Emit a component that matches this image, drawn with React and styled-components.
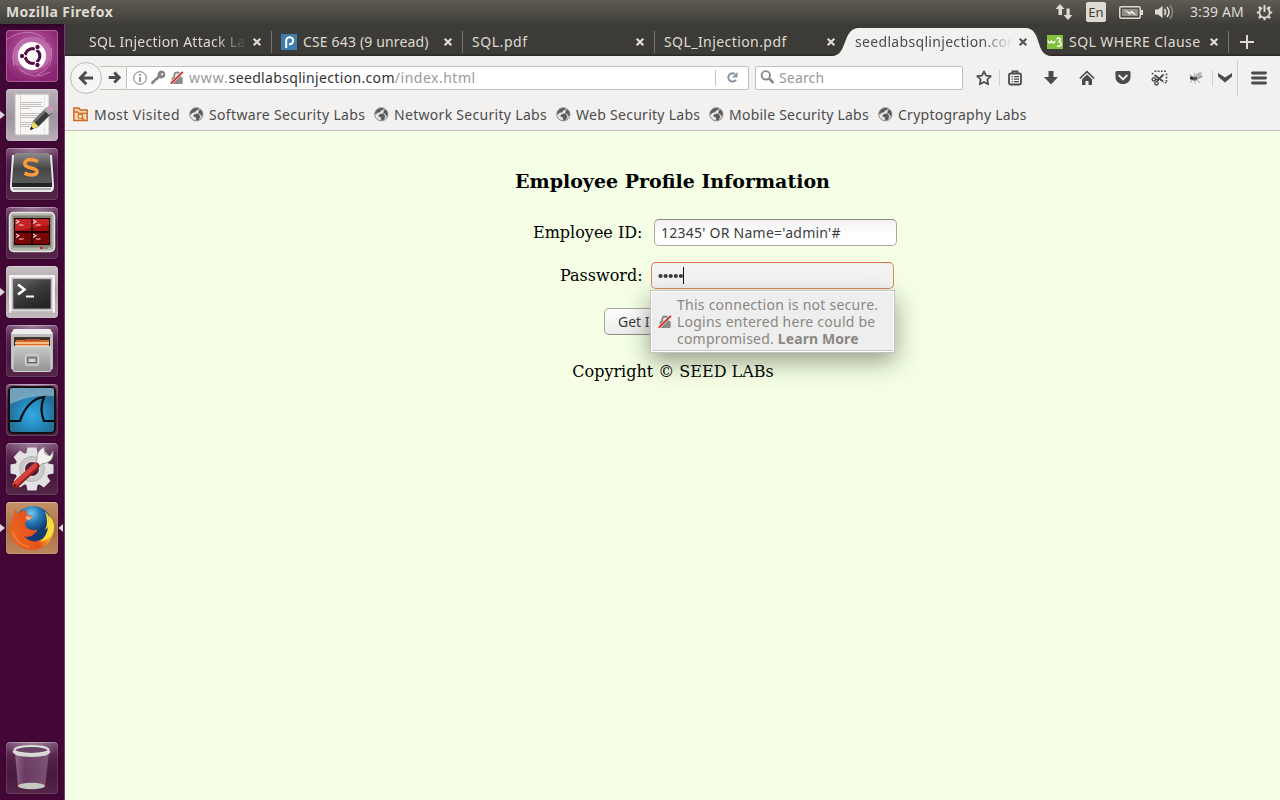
import React from 'react';
import styled, { createGlobalStyle } from 'styled-components';

const Global = createGlobalStyle`
  * { box-sizing: border-box; }
  html, body { margin: 0; padding: 0; overflow: hidden; }
  body { font-family: "Noto Sans", "Open Sans", sans-serif; font-size: 14px; color: #4c4c4c; }
  svg { display: block; flex: none; }
`;

const Desktop = styled.div`
  width: 1280px; height: 800px; display: flex; flex-direction: column; overflow: hidden;
`;
const Label = styled.span`
  white-space: pre; letter-spacing: ${p => p.$ls || 0}px; line-height: 20px;
  font-weight: ${p => (p.$bold ? 700 : 400)};
`;

/* top panel */
const Panel = styled.header`
  height: 24px; flex: none; display: flex; align-items: center; color: #dfdbd2;
  padding: 0 7px 0 6px; background: linear-gradient(#5f5d50 0, #5b5850 2px, #3f3e39 24px);
`;
const Indicators = styled.div`
  margin-left: auto; display: flex; align-items: center;
`;
const Lang = styled.span`
  width: 20px; height: 20px; margin: 0 13px 0 13px; border-radius: 2px; background: #dfdbd2;
  color: #3c3b37; display: flex; align-items: center; justify-content: center; font-size: 13px;
`;
const VolumeIcon = styled.svg`margin-left: 11px;`;
const Clock = styled(Label)`margin: 0 12px 0 15px; width: 54px;`;

const Body = styled.div`display: flex; flex: 1; min-height: 0;`;

/* launcher */
const Launcher = styled.nav`
  width: 65px; flex: none; padding: 6px 0 6px; display: flex; flex-direction: column; gap: 7px;
  background: linear-gradient(#2f0427 0, #410735 5px, #430736 100%); border-right: 1px solid #7b3b76;
`;
const Slot = styled.div`
  height: 52px; display: flex; align-items: center;
  margin-top: ${p => (p.$last ? 'auto' : 0)};
`;
const Gutter = styled.span`width: 6px; flex: none;`;
const Tile = styled.div`
  width: 52px; height: 52px; border-radius: 4px; overflow: hidden;
  background: ${p => p.$bg};
  box-shadow: inset 0 0 0 1px rgba(255,255,255,.12), inset 0 1px 0 rgba(255,255,255,.25), 0 0 2px rgba(0,0,0,.4);
`;

/* browser */
const Browser = styled.main`flex: 1; min-width: 0; display: flex; flex-direction: column;`;
const TabStrip = styled.div`
  height: 32px; flex: none; display: flex; padding-left: 15px; color: #dfdbd2;
  background: linear-gradient(#3c3b37 0 30px, #2b2a27 31px);
`;
const Tab = styled.div`
  position: relative; width: ${p => p.$w}px; height: 32px; display: flex; align-items: center;
  padding: 4px 9px 0 9px; color: ${p => (p.$active ? '#4c4c4c' : '#dfdbd2')};
  &::before {
    content: ''; position: absolute; left: 0; top: 7px; width: 1px; height: 22px;
    background: ${p => (p.$rule ? '#75746e' : 'transparent')};
  }
`;
const TabShape = styled.svg`position: absolute; left: -13px; top: 4px;`;
const Favicon = styled.svg`margin-left: 1px;`;
const TabText = styled(Label)`
  position: relative; flex: 1; min-width: 0; overflow: hidden; margin-left: ${p => p.$gap || 0}px;
  ${p => p.$fade && 'mask-image: linear-gradient(90deg, #000 calc(100% - 32px), transparent 100%);'}
`;
const TabClose = styled.svg`position: relative; margin-left: 5px;`;
const NewTab = styled.div`
  width: 52px; padding: 4px 0 0 11px; display: flex; align-items: center; position: relative;
  &::before { content: ''; position: absolute; left: 0; top: 7px; width: 1px; height: 22px; background: #75746e; }
`;

const NavBar = styled.div`
  height: 43px; flex: none; background: #f2f1f0; display: flex; align-items: center; padding-left: 5px;
`;
const Back = styled.div`
  width: 32px; height: 32px; border-radius: 50%; border: 1px solid #bdbbb8; background: #f6f5f4;
  display: flex; align-items: center; justify-content: center; flex: none; z-index: 1;
`;
const Forward = styled.div`
  width: 26px; height: 24px; margin-left: -2px; background: #f6f5f4; border: solid #c2c0bd; border-width: 1px 0;
  display: flex; align-items: center; justify-content: center; padding-left: 2px;
`;
const UrlField = styled.div`
  width: 623px; height: 24px; border: 1px solid #c2c0bd; border-radius: 0 2px 2px 0; background: #fff;
  display: flex; align-items: center; padding-left: 6px; gap: 4px;
`;
const Address = styled.div`display: flex; flex: 1; margin-left: 1px; color: #999a9b;`;
const Host = styled(Label)`color: #333;`;
const Reload = styled.div`
  width: 33px; height: 16px; border-left: 1px solid #c8c6c4; display: flex; align-items: center; justify-content: center;
`;
const SearchField = styled.div`
  width: 208px; height: 24px; margin-left: 6px; border: 1px solid #c2c0bd; border-radius: 2px; background: #fff;
  display: flex; align-items: center; padding-left: 4px; gap: 4px; color: #96989a;
`;
const Tools = styled.div`flex: 1; display: flex; align-items: center;`;
const Tool = styled.div`
  width: ${p => p.$w}px; padding-left: ${p => p.$pad || 0}px; display: flex; justify-content: center; flex: none;
`;
const Rule = styled.span`width: 1px; height: ${p => p.$h}px; background: #d3d1cf; flex: none;`;

const Bookmarks = styled.div`
  height: 32px; flex: none; background: #f2f1f0; border-bottom: 1px solid #c5c2bd; display: flex;
  align-items: center; padding-left: 8px;
`;
const Bookmark = styled.div`
  display: flex; align-items: center; gap: ${p => p.$gap || 5}px; width: ${p => p.$w}px; flex: none;
`;

/* page */
const Page = styled.section`
  flex: 1; background: #f4ffe5; color: #000; font: 16px/19px "DejaVu Serif", serif;
  display: flex; flex-direction: column; align-items: flex-start; padding-top: 39px;
`;
const Title = styled.h3`margin: 0; width: 1215px; text-align: center; font-size: 19px; line-height: 23px; font-weight: 700;`;
const FieldRow = styled.div`
  display: flex; align-items: center; height: 27px; gap: ${p => p.$gap}px;
  margin: ${p => p.$top}px 0 0 ${p => p.$left}px;
`;
const Caption = styled.label`width: ${p => p.$w}px; white-space: nowrap;`;
const Field = styled.div`
  position: relative; width: 243px; height: 27px; border-radius: 5px; padding-left: 6px;
  border: 1px solid ${p => (p.$focus ? '#e0876a' : '#aaa9a5')}; border-top-color: ${p => (p.$focus ? '#dd7350' : '#8b8a86')};
  background: ${p => (p.$focus ? 'linear-gradient(#f1f1f0,#f7f7f7)' : 'linear-gradient(#f2f2f2,#fff 60%)')};
  color: #3c3c3c; display: flex; align-items: center; font-family: "Noto Sans", sans-serif; font-size: 14px;
`;
const Dots = styled.svg`margin-left: -1px;`;
const Caret = styled.span`width: 1px; height: 17px; background: #111;`;
const Submit = styled.div`
  width: 76px; height: 27px; margin: 19px 0 0 539px; border: 1px solid #a9a8a4; border-bottom-color: #8f8e8a;
  border-radius: 5px; background: linear-gradient(#fff,#ececeb); color: #3c3c3c; padding-left: 13px;
  display: flex; align-items: center; font-family: "Noto Sans", sans-serif; font-size: 14px;
`;
const Copyright = styled.p`margin: 27px 0 0; width: 1216px; text-align: center;`;
const Warning = styled.div`
  position: absolute; left: -2px; top: 27px; z-index: 2; width: 245px; height: 63px; background: #eee;
  border: 1px solid #c3c3c1; box-shadow: inset 0 0 0 1px #fff, inset 0 -2px 0 #c9c9c7, 0 8px 24px rgba(50,60,40,.5);
  display: flex; align-items: center; padding-left: 7px; gap: 5px; color: #8b8782;
`;
const WarningText = styled.div`
  display: flex; flex-direction: column; font-size: 14px;
  ${Label} { line-height: 17px; }
`;

const Cross = ({ c }) => (
  <TabClose width="10" height="10" viewBox="0 0 10 10">
    <path d="M1.7 1.7L8.3 8.3M8.3 1.7L1.7 8.3" stroke={c} strokeWidth="2.2" />
  </TabClose>
);
const Lock = () => (
  <svg width="14" height="14" viewBox="0 0 14 14">
    <path d="M4.300 7V4.300a2.800 2.800 0 0 1 5.600 0V7" fill="none" stroke="#8b8b89" strokeWidth="2" />
    <rect x="1.700" y="6" width="11" height="7" rx="1" fill="#8b8b89" />
    <path d="M1 12.500L12.700 1" stroke="#f5eeee" strokeWidth="2.800" />
    <path d="M.8 12.700L12.900 .9" stroke="#d92d21" strokeWidth="1.800" />
  </svg>
);
const Globe = () => (
  <svg width="15" height="15" viewBox="0 0 15 15">
    <defs><linearGradient id="gl" x2="1" y2="1"><stop stopColor="#fdfdfd" /><stop offset="1" stopColor="#c9c9c9" /></linearGradient></defs>
    <circle cx="7.300" cy="7.300" r="6.600" fill="url(#gl)" stroke="#8a8a8a" />
    <path d="M3.800 2Q7 .3 10 1.400L9 3.200 7 3.500 6.200 5.300 3.600 5.800 1.800 7.800 1 6.500Q1.400 3.600 3.800 2zM10 2.800l2 .3Q14.200 5.500 13.700 8.200L12.200 9 11.200 7l-2-.8zM5.800 7l3.500-.4 2 2.900-1.600 3.500-2.200.6-.8-3.300L4 9.300z" fill="#5c5c5c" />
  </svg>
);
const Arrow = ({ flip, size }) => (
  <svg width={size} height={size} viewBox="0 0 16 16">
    <g transform={flip ? 'translate(16 0) scale(-1 1)' : undefined} fill="none" stroke="#4b4b4a" strokeWidth={flip ? 3.6 : 2.9}>
      <path d="M15 8H3M8.3 1.8L2.3 8l6 6.200" />
    </g>
  </svg>
);

const UbuntuLogo = () => (
  <svg width="52" height="52" viewBox="0 0 52 52">
    <defs><radialGradient id="ub" cx=".5" cy=".42" r=".6"><stop offset="0" stopColor="#c87ab5" /><stop offset=".65" stopColor="#a03c88" /><stop offset="1" stopColor="#8a2371" /></radialGradient></defs>
    <rect width="52" height="52" rx="4" fill="url(#ub)" />
    <path d="M8 35C2 18 16 2 35 8 48 14 48 31 37 38" fill="#d99aca" opacity=".3" />
    <path d="M44 13C52 30 34 50 16 42 4 34 8 16 18 12" fill="#d99aca" opacity=".2" />
    <path d="M0 10Q22-5 39 9M8 36Q3 16 20 8M45 18Q49 38 31 45M14 40Q28 51 44 42" fill="none" stroke="#e4b5d9" opacity=".5" />
    <rect x=".5" y=".5" width="51" height="51" rx="3.500" fill="none" stroke="#c67db4" opacity=".6" />
    <circle cx="26" cy="26" r="14" fill="#fff" />
    <circle cx="26.500" cy="26" r="7.300" fill="none" stroke="#570c43" strokeWidth="3.200" />
    <path d="M26.500 26L15 26M26.500 26L31 35.500M26.500 26L31 16.500" stroke="#fff" strokeWidth="1.500" />
    {[[16, 26], [31.5, 17], [31.5, 35]].map(([x, y]) => <circle key={y} cx={x} cy={y} r="2.700" fill="#570c43" stroke="#fff" strokeWidth="1" />)}
    <circle cx="26.500" cy="26" r="5.600" fill="#fff" />
  </svg>
);
const Editor = () => (
  <svg width="52" height="52" viewBox="0 0 52 52">
    <path d="M9 5h34v41H9z" fill="#f7f7f5" stroke="#bcb9b9" />
    <path d="M14.500 5v41" stroke="#f1c5cc" />
    <path d="M38.500 5v41" stroke="#dfe4ee" />
    <path d="M15 13.500h21M15 15.500h20M15 17.500h22M15 19.500h9M15 24.500h20M15 26.500h21M15 28.500h15M15 33.500h13M15 35.500h12M15 37.500h9" stroke="#b4b4b4" strokeWidth=".8" />
    <path d="M24 41l3-9 13-13 6 5-14 14z" fill="#393a3a" />
    <path d="M28 33L41 20" stroke="#777" strokeWidth="2" />
    <path d="M24 41l3-9 5.500 5.500z" fill="#eedb67" /><path d="M24 41l1.200-3.500 2.300 2.300z" fill="#111" />
    <path d="M38 21l3-3 5.500 5-3.500 3z" fill="#a9a9a9" /><path d="M41 18q2.500-2.500 5 0 2.500 3 .5 5z" fill="#df91c7" />
  </svg>
);
const Sublime = () => (
  <svg width="52" height="52" viewBox="0 0 52 52">
    <defs><linearGradient id="sb" x2="0" y2="1"><stop stopColor="#8c8c8c" /><stop offset=".45" stopColor="#505050" /><stop offset=".5" stopColor="#454545" /><stop offset="1" stopColor="#5a5a5a" /></linearGradient></defs>
    <path d="M6 7l-2 31q0 6 4 6h36q4 0 4-6L46 7z" fill="#e9e9e9" />
    <path d="M7 41h38" stroke="#999" strokeWidth="1.500" />
    <path d="M6 34h40v5H6z" fill="#222" />
    <path d="M11 5h30q3 0 3 3l2 25q0 2-2 2H8q-2 0-2-2L8 8q0-3 3-3z" fill="url(#sb)" />
    <path d="M32 13.500Q26 10.500 21.500 12 17.500 14 19.500 17.500c2 3 10.500 2 11.500 5.500 .5 4.500-6.500 5-12.500 2.200" fill="none" stroke="#f79b3c" strokeWidth="3.600" />
  </svg>
);
const Terminator = () => (
  <svg width="52" height="52" viewBox="0 0 52 52">
    <rect x="3.500" y="5.500" width="45" height="39" rx="4" fill="#b3b6ad" stroke="#e6e6e0" strokeWidth="1.500" />
    <rect x="6.500" y="8.500" width="39" height="32" fill="#80837a" /><rect x="8" y="11" width="36" height="27" fill="#200" />
    <path d="M9 12h16v12H9zM27 12h16v12H27z" fill="#a80d0d" /><path d="M9 26h16v11H9zM27 26h16v11H27z" fill="#7a0505" />
    <path d="M9 12h34v6L9 24z" fill="#f55" opacity=".3" />
    {[[10, 13], [27, 13], [10, 27], [27, 27]].map(([x, y]) => <path key={x + '-' + y} d={`M${x} ${y}l3 1.500-3 2M${x + 3} ${y + 5}h4.500`} stroke="#ffd6d6" strokeWidth="1.100" fill="none" />)}
    <path d="M34 41h3" stroke="#e11" strokeWidth="2" /><path d="M38 41h4" stroke="#858880" strokeWidth="2" />
  </svg>
);
const Terminal = () => (
  <svg width="52" height="52" viewBox="0 0 52 52">
    <defs><linearGradient id="tm" x2=".6" y2="1"><stop stopColor="#666" /><stop offset=".5" stopColor="#3c3c3c" /><stop offset="1" stopColor="#252525" /></linearGradient></defs>
    <rect x="4" y="10" width="44" height="36" fill="#deddda" stroke="#fff" strokeWidth="1.500" />
    <path d="M5 46h42" stroke="#888" /><rect x="7" y="13" width="38" height="30" fill="#292929" stroke="#999" />
    <rect x="8" y="14" width="36" height="28" fill="url(#tm)" />
    <path d="M12 18.500l6.500 5-6.500 5" fill="none" stroke="#fff" strokeWidth="2.600" /><path d="M20 30.500h8" stroke="#fff" strokeWidth="2.200" />
  </svg>
);
const Files = () => (
  <svg width="52" height="52" viewBox="0 0 52 52">
    <defs><linearGradient id="fl" x2="0" y2="1"><stop stopColor="#c8c8c8" /><stop offset="1" stopColor="#939393" /></linearGradient></defs>
    <path d="M8 4h36l3 5v35H5V9z" fill="#bdbdbd" /><path d="M8 4h36l3 5H5z" fill="#ededed" />
    <path d="M8 12h36v11H8z" fill="#3d3430" /><path d="M10 15h33v7H9z" fill="#d9672d" /><path d="M9 17h34v2H9zM9 20h34v2H9z" fill="#f5bf82" />
    <path d="M20 14h13l2 2H18z" fill="#b3502a" /><rect x="7" y="21.500" width="38" height="25" rx="1.500" fill="url(#fl)" stroke="#d4d4d4" />
    <rect x="19.500" y="30" width="13" height="10" rx="2" fill="#a3a3a3" stroke="#e4e4e4" /><rect x="22" y="33" width="8" height="4.500" fill="#d5d5d5" stroke="#5d5d5d" />
  </svg>
);
const Shark = () => (
  <svg width="52" height="52" viewBox="0 0 52 52">
    <defs><radialGradient id="sh" cy=".6"><stop stopColor="#35aae6" /><stop offset=".65" stopColor="#2387b8" /><stop offset="1" stopColor="#276f99" /></radialGradient></defs>
    <rect x="3" y="3" width="46" height="46" rx="4" fill="url(#sh)" stroke="#111" strokeWidth="2" />
    <path d="M4 4h44v8Q25 10 4 20z" fill="#fff" opacity=".35" />
    <path d="M4 37h10C18 24 27 14 38 13q-5 12 0 24h10" fill="none" stroke="#080b0d" strokeWidth="2.200" />
  </svg>
);
const Settings = () => (
  <svg width="52" height="52" viewBox="0 0 52 52">
    <g transform="translate(26 26)" fill="#e2e2e2">
      {[0, 45, 90, 135, 180, 225, 270, 315].map(a => <path key={a} transform={`rotate(${a})`} d="M-6-14l1.500-7.500h9L6-14z" />)}
      <path fillRule="evenodd" d="M-17 0a17 17 0 1 0 34 0a17 17 0 1 0-34 0M-7 0a7 7 0 1 1 14 0a7 7 0 1 1-14 0" />
      <circle r="10" fill="none" stroke="#c9c9c9" strokeWidth="4" /><circle r="12.500" fill="none" stroke="#b1b1b1" />
    </g>
    <path d="M31 17Q30 8 38 4l1 7 5 2 3-5q1 10-7 12-5 0-6 3l-5-3z" fill="#f1f1ee" stroke="#8d8d8d" strokeWidth=".8" />
    <path d="M30 23L9.500 42" stroke="#98211d" strokeWidth="7" strokeLinecap="round" /><path d="M29 22.500L9 41" stroke="#d4433c" strokeWidth="4.500" strokeLinecap="round" />
    <circle cx="9" cy="42.500" r="1.500" fill="#5f1410" />
  </svg>
);
const Firefox = () => (
  <svg width="52" height="52" viewBox="0 0 52 52">
    <defs><radialGradient id="fb" cx=".45" cy=".2"><stop stopColor="#74c8ee" /><stop offset=".5" stopColor="#2476b5" /><stop offset="1" stopColor="#103a70" /></radialGradient>
      <linearGradient id="fo" x1="0" x2="1" y1=".7" y2=".4"><stop stopColor="#ed641d" /><stop offset=".55" stopColor="#e5521e" /><stop offset=".8" stopColor="#f3a12b" /><stop offset="1" stopColor="#f9e03c" /></linearGradient></defs>
    <circle cx="27" cy="23" r="19" fill="url(#fb)" />
    <path d="M8 8q3 1 4 4 4-4 8-4 0 4 2 5l4 1q0 3-4 4l-3 3 1 4q4 4 9 3 4-1 1 2-6 7-12 4 8 9 18 3C45 32 45 20 40 11q8 7 8 15C47 40 38 48 26 48 13 48 4 39 4 27 4 19 9 15 8 8z" fill="url(#fo)" />
    <path d="M39 9q4 12 0 19l3-3q-1 9-8 15Q48 37 48 23q-1-5-4-8 0 4-1 5 0-6-4-11z" fill="#f8de3d" />
    <path d="M20 14q-1 4 3 4l3-3z" fill="#f3b680" />
    <path d="M7 30q4 13 17 15" fill="none" stroke="#f79548" strokeWidth="1.500" opacity=".6" />
  </svg>
);
const Trash = () => (
  <svg width="52" height="52" viewBox="0 0 52 52">
    <defs><linearGradient id="tr"><stop stopColor="#a98aa6" stopOpacity=".7" /><stop offset=".3" stopColor="#8a5c85" stopOpacity=".5" /><stop offset="1" stopColor="#9a7896" stopOpacity=".6" /></linearGradient></defs>
    <path d="M9 10h34l-4 35H12z" fill="url(#tr)" />
    <ellipse cx="25.500" cy="44" rx="13.500" ry="3.300" fill="#c7c9c0" />
    <ellipse cx="25.500" cy="8" rx="17" ry="4" fill="#6b4367" stroke="#dcddd6" strokeWidth="2.200" />
    <path d="M8 9q0 4.500 17.500 4.500T43 9" fill="none" stroke="#d7d9d0" strokeWidth="2.800" />
  </svg>
);

const dim = 'radial-gradient(ellipse 60% 30% at 50% 0, #a07f9b, transparent), linear-gradient(#70406a 0,#54234c 30%,#49173f 60%,#552549 100%)';
const apps = [
  { Icon: UbuntuLogo, bg: '#93317d' },
  { Icon: Editor, bg: 'linear-gradient(#bdb5bb,#9e949c 55%,#bab2b8)', run: true },
  { Icon: Sublime, bg: dim }, { Icon: Terminator, bg: dim },
  { Icon: Terminal, bg: 'linear-gradient(#c7c1c5,#a9a1a7 45%,#bfb8bd)', run: true },
  { Icon: Files, bg: dim }, { Icon: Shark, bg: dim }, { Icon: Settings, bg: dim },
  { Icon: Firefox, bg: 'linear-gradient(#c49369,#a96e43 55%,#bd895e)', run: true, focus: true },
];

const Pip = ({ left }) => (
  <svg width="5" height="8" viewBox="0 0 5 8"><path d={left ? 'M5 0v8L.5 4z' : 'M0 0v8l5-4z'} fill="#dcd5da" /></svg>
);

export default function App() {
  return (
    <Desktop>
      <Global />
      <Panel>
        <Label $bold $ls={0.38}>Mozilla Firefox</Label>
        <Indicators>
          <svg width="18" height="18" viewBox="0 0 18 18" fill="#dfdbd2">
            <path d="M5 1l4.500 5H7v6H3.500V6H.5zM13 17l4.500-5H14.700V5.500h-3.200V12H8.500z" />
          </svg>
          <Lang><Label>En</Label></Lang>
          <svg width="24" height="13" viewBox="0 0 24 13">
            <rect x=".75" y=".75" width="20.500" height="11.500" rx="1.500" fill="none" stroke="#dfdbd2" strokeWidth="1.500" />
            <path d="M22 4h2v5h-2z" fill="#dfdbd2" /><path d="M3 3h16v7H3z" fill="#908d85" />
            <path d="M5 3.500l6.500 3 .5-2.500 6 5.500-6.500-2.500-.5 2z" fill="#f3efe6" />
          </svg>
          <VolumeIcon width="21" height="16" viewBox="0 0 21 16">
            <path d="M1 5.500h3L8.500 2v12L4 10.500H1z" fill="#dfdbd2" />
            <g fill="none" strokeWidth="1.600"><path d="M10.500 5q2.200 3 0 6M13 3q4 5 0 10" stroke="#dfdbd2" /><path d="M15.800 1q5.500 7 0 14" stroke="#8a877f" /></g>
          </VolumeIcon>
          <Clock $ls={0.1}>3:39 AM</Clock>
          <svg width="17" height="17" viewBox="0 0 17 17" fill="none" stroke="#dfdbd2">
            <path d="M6 3.900a5.200 5.200 0 1 0 5 0" strokeWidth="1.800" />
            <path d="M8.500 1v7" strokeWidth="2" />
            <path d="M.8 8.500h2.500M13.700 8.500h2.500M8.500 13.700v2.500M2.900 2.900l1.900 1.900M14.100 2.900l-1.900 1.900M2.900 14.100l1.900-1.900M14.100 14.100l-1.900-1.900" strokeWidth="2.200" />
          </svg>
        </Indicators>
      </Panel>
      <Body>
        <Launcher>
          {apps.map(({ Icon, bg, run, focus }, i) => (
            <Slot key={i}>
              <Gutter>{run && <Pip />}</Gutter>
              <Tile $bg={bg}><Icon /></Tile>
              {focus && <Pip left />}
            </Slot>
          ))}
          <Slot $last><Gutter /><Tile $bg={dim}><Trash /></Tile></Slot>
        </Launcher>
        <Browser>
          <TabStrip>
            <Tab $w={191}><TabText $fade $ls={0.25}>SQL Injection Attack La</TabText><Cross c="#dfdbd2" /></Tab>
            <Tab $w={191} $rule>
              <Favicon width="16" height="16" viewBox="0 0 16 16">
                <rect width="16" height="16" fill="#3f7cac" />
                <path d="M5.200 14V6.500a3.500 3.500 0 1 1 3.500 3.700H8" fill="none" stroke="#fff" strokeWidth="2" />
              </Favicon>
              <TabText $gap={6} $ls={0.16}>CSE 643 (9 unread)</TabText><Cross c="#dfdbd2" />
            </Tab>
            <Tab $w={192} $rule><TabText $gap={1} $ls={0.55}>SQL.pdf</TabText><Cross c="#dfdbd2" /></Tab>
            <Tab $w={191} $rule><TabText $gap={1} $ls={0.43}>SQL_Injection.pdf</TabText><Cross c="#dfdbd2" /></Tab>
            <Tab $w={192} $active>
              <TabShape width="220" height="28" viewBox="0 0 220 28">
                <path d="M0 28C16 28 10 0 27 0H193C211 0 202 28 220 28z" fill="#f2f1f0" />
              </TabShape>
              <TabText $gap={1} $fade $ls={0.32}>seedlabsqlinjection.com</TabText><Cross c="#555" />
            </Tab>
            <Tab $w={191}>
              <Favicon width="16" height="14" viewBox="0 0 16 14">
                <rect width="16" height="14" fill="#85c13f" />
                <path d="M1 5.500q.5 3 2.500 2 1-1 1-2 .5 3 2.500 2 1-1 1-1.500M9.500 4q2-2 4 0 0 2-2 2.700 3 0 2.700 3-1 2.300-4.200 1.300" fill="none" stroke="#fff" strokeWidth="1.500" />
              </Favicon>
              <TabText $gap={6} $ls={0.44}>SQL WHERE Clause</TabText><Cross c="#dfdbd2" />
            </Tab>
            <NewTab>
              <svg width="16" height="16" viewBox="0 0 16 16"><path d="M8 1v14M1 8h14" stroke="#dfdbd2" strokeWidth="2" /></svg>
            </NewTab>
          </TabStrip>

          <NavBar>
            <Back><Arrow size={16} /></Back>
            <Forward><Arrow flip size={13} /></Forward>
            <UrlField>
              <svg width="14" height="14" viewBox="0 0 14 14" fill="none" stroke="#777"><circle cx="7" cy="7" r="6.300" /><path d="M7 6v5M7 3v1.800" strokeWidth="1.500" /></svg>
              <svg width="15" height="15" viewBox="0 0 15 15"><path fillRule="evenodd" d="M8 1.500Q11-.5 13.500 2q1.500 2.500 0 5-2.300 2.300-5 1L6 10.500l-1.500.3-.3 1.700-1.500.3-.4 1.500H.3v-2.500L6.800 6Q6 3.500 8 1.500zM11 3.200a1 1 0 1 0 .1 0z" fill="#838383" /></svg>
              <Lock />
              <Address><Label $ls={0.85}>www.</Label><Host $ls={0.34}>seedlabsqlinjection.com</Host><Label $ls={0.5}>/index.html</Label></Address>
              <Reload>
                <svg width="13" height="13" viewBox="0 0 13 13"><path d="M10 8.800A4.200 4.200 0 1 1 9 3" fill="none" stroke="#8695a1" strokeWidth="2" /><path d="M11.500 1v5.500H6z" fill="#8695a1" /></svg>
              </Reload>
            </UrlField>
            <SearchField>
              <svg width="15" height="15" viewBox="0 0 15 15" fill="none" stroke="#8b8b8b"><circle cx="5.800" cy="5.300" r="4.200" strokeWidth="1.900" /><path d="M9 8.500l4.500 4.500" strokeWidth="2.500" /></svg>
              <Label $ls={0.16}>Search</Label>
            </SearchField>
            <Tools>
              <Tool $w={36} $pad={6}>
                <svg width="16" height="16" viewBox="0 0 16 16"><path d="M8 1.300l2 4.300 4.800.6-3.500 3.300.9 4.800L8 12l-4.200 2.300.9-4.800L1.200 6.200 6 5.600z" fill="none" stroke="#4b4b4a" strokeWidth="1.700" strokeLinejoin="round" /></svg>
              </Tool>
              <Rule $h={16} />
              <Tool $w={30}>
                <svg width="16" height="16" viewBox="0 0 16 16" fill="none" stroke="#4b4b4a"><rect x="2" y="3.500" width="12" height="11" rx="1.500" strokeWidth="1.800" /><path d="M5.500 3V1.300h5V3" strokeWidth="1.800" /><path d="M4.500 6.700h1.300M7 6.700h5M4.500 9.200h1.300M7 9.200h5M4.500 11.700h1.300M7 11.700h5" strokeWidth="1.200" /></svg>
              </Tool>
              <Tool $w={42}>
                <svg width="16" height="16" viewBox="0 0 16 16"><path d="M5.500 1h5v6H15l-7 7.500L1 7h4.500z" fill="#4b4b4a" /></svg>
              </Tool>
              <Tool $w={30}>
                <svg width="16" height="16" viewBox="0 0 16 16"><path d="M.8 8.500L8 1.700l7.200 6.800" fill="none" stroke="#4b4b4a" strokeWidth="1.700" /><path d="M8 4.500l5 4.700V15H9.500v-4h-3v4H3V9.200z" fill="#4b4b4a" /></svg>
              </Tool>
              <Tool $w={42}>
                <svg width="16" height="15" viewBox="0 0 17 16"><path d="M2 1h13q1.500 0 1.500 1.500V7.500C16.500 12 13 15 8.500 15S.5 12 .5 7.500V2.500Q.5 1 2 1z" fill="#4b4b4a" /><path d="M4.500 6l4 4 4-4" fill="none" stroke="#f2f1f0" strokeWidth="2.200" strokeLinecap="round" strokeLinejoin="round" /></svg>
              </Tool>
              <Tool $w={30}>
                <svg width="17" height="16" viewBox="0 0 17 16" fill="none" stroke="#4b4b4a"><path d="M1.500 4.500V1.300M3.500 1.300H16M15.500 3.500v8M15.500 12.500H12" strokeWidth="1.600" strokeDasharray="1.800 1.400" /><path d="M4.500 9.200L13.500 4.500M5.500 12L2.500 4.500M4.500 9.500l8 4" strokeWidth="0" /><path d="M3.500 5l8.500 6.500M12.500 4.500L6 11" strokeWidth="1.900" /><circle cx="2.800" cy="9.300" r="1.700" strokeWidth="1.300" /><circle cx="5.500" cy="13.300" r="1.700" strokeWidth="1.300" /><path d="M4.500 9.500h3" strokeWidth="1.500" /></svg>
              </Tool>
              <Tool $w={38} $pad={5}>
                <svg width="16" height="14" viewBox="0 0 16 14"><path d="M7 5Q10 0 14 1.500q-1 4-6 5z" fill="#b5b5b5" /><path d="M9 7q4-4 6-2-2 3-6 3z" fill="#a0a0a0" /><ellipse cx="6.500" cy="7.500" rx="3" ry="2" fill="#5d5a57" /><circle cx="3.500" cy="7" r="1.700" fill="#2f2d2b" /><path d="M4 9l-2 3M7 9v3.500M9 9l3 3M4 5L1 3.500M6 5l1-3" stroke="#888" strokeWidth=".7" /></svg>
              </Tool>
              <Rule $h={16} />
              <Tool $w={24}>
                <svg width="16" height="10" viewBox="0 0 16 10"><path d="M1 0L8 4.500 15 0V3.500L8 9.500 1 3.500z" fill="#4b4b4a" /></svg>
              </Tool>
              <Rule $h={36} />
              <Tool $w={42}>
                <svg width="16" height="14" viewBox="0 0 16 14"><path d="M1.500 2h13M1.500 7h13M1.500 12h13" stroke="#4b4b4a" strokeWidth="2.900" strokeLinecap="round" /></svg>
              </Tool>
            </Tools>
          </NavBar>

          <Bookmarks>
            <Bookmark $w={116} $gap={6}>
              <svg width="15" height="15" viewBox="0 0 15 15" fill="none" stroke="#ca6a20"><path d="M.8 13.500V1h5l1.500 2h6.900v10.500z" fill="#f8d9b4" strokeWidth="1.400" /><path d="M1 5h3.500L6 6.300h8" strokeWidth="1.300" /><circle cx="7.300" cy="9.300" r="2.200" fill="#fff0d8" strokeWidth="1.100" /><path d="M9 11l2 2" strokeWidth="1.500" /></svg>
              <Label $ls={0.46}>Most Visited</Label>
            </Bookmark>
            <Bookmark $w={185}><Globe /><Label $ls={0.35}>Software Security Labs</Label></Bookmark>
            <Bookmark $w={182}><Globe /><Label $ls={0.3}>Network Security Labs</Label></Bookmark>
            <Bookmark $w={153}><Globe /><Label $ls={0.28}>Web Security Labs</Label></Bookmark>
            <Bookmark $w={169}><Globe /><Label $ls={0.23}>Mobile Security Labs</Label></Bookmark>
            <Bookmark $w={160}><Globe /><Label $ls={0.25}>Cryptography Labs</Label></Bookmark>
          </Bookmarks>

          <Page>
            <Title>Employee Profile Information</Title>
            <FieldRow $top={26} $left={468} $gap={12}>
              <Caption $w={109}>Employee ID:</Caption>
              <Field><Label $ls={0.25}>12345' OR Name='admin'#</Label></Field>
            </FieldRow>
            <FieldRow $top={16} $left={495} $gap={8}>
              <Caption $w={83}>Password:</Caption>
              <Field $focus>
                <Dots width="26" height="6" viewBox="0 0 26 6" fill="#3c3c3c">{[0, 1, 2, 3, 4].map(i => <circle key={i} cx={3.5 + i * 5.1} cy="3" r="2.100" />)}</Dots>
                <Caret />
                <Warning>
                  <Lock />
                  <WarningText>
                    <Label $ls={0.25}>This connection is not secure.</Label>
                    <Label $ls={0.23}>Logins entered here could be</Label>
                    <Label $ls={0.2}>compromised. <Label as="b" $bold $ls={0.1}>Learn More</Label></Label>
                  </WarningText>
                </Warning>
              </Field>
            </FieldRow>
            <Submit><Label>Get I</Label></Submit>
            <Copyright>Copyright © SEED LABs</Copyright>
          </Page>
        </Browser>
      </Body>
    </Desktop>
  );
}
